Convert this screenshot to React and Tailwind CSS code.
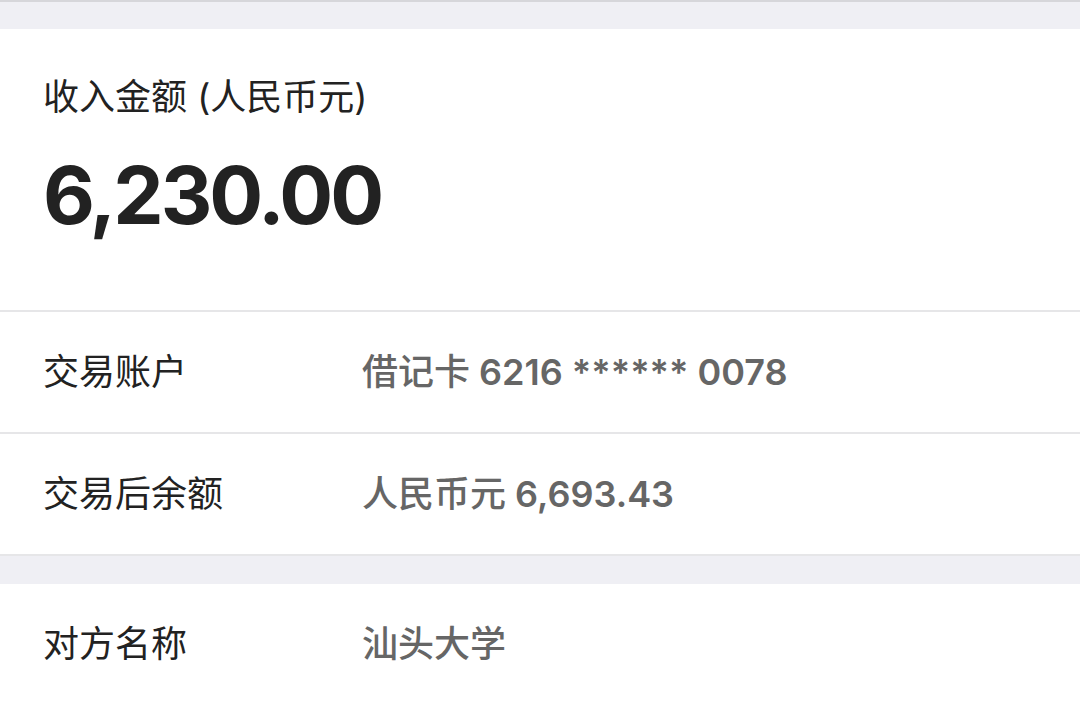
import React from 'react';

const rows = [
  { label: '交易账户', prefix: '借记卡', num: ' 6216 ****** 0078' },
  { label: '交易后余额', prefix: '人民币元', num: ' 6,693.43' },
];

export default function App() {
  const font = { fontFamily: 'Inter, "Noto Sans CJK SC", sans-serif' };
  return (
    <div className="w-[1080px] h-[712px] overflow-hidden bg-white" style={font}>
      <div className="h-[2px] bg-[#d6d6da]" />
      <div className="h-[27px] bg-[#efeff4]" />

      {/* amount card */}
      <div className="h-[281px] bg-white pl-[43px] pt-[48px] flex flex-col">
        <div className="text-[36px] leading-[40px] text-[#222]">收入金额 (人民币元)</div>
        <div className="mt-[33px] text-[80px] leading-[90px] font-bold text-[#222] tracking-[-3px]">6,230.00</div>
      </div>
      <div className="h-[2px] bg-[#e6e6e8]" />

      {rows.map((r, i) => (
        <div key={i}>
          <div className="h-[120px] flex items-center pl-[43px]">
            <div className="w-[319px] text-[36px] text-[#222]">{r.label}</div>
            <div className="text-[36px] text-[#666] whitespace-pre">
              <span className="font-medium">{r.prefix}</span>
              <span className="font-semibold">{r.num}</span>
            </div>
          </div>
          <div className="h-[2px] bg-[#e6e6e8]" />
        </div>
      ))}

      <div className="h-[28px] bg-[#efeff4]" />

      <div className="h-[120px] flex items-center pl-[43px]">
        <div className="w-[319px] text-[36px] text-[#222]">对方名称</div>
        <div className="text-[36px] font-medium text-[#666]">汕头大学</div>
      </div>
    </div>
  );
}
